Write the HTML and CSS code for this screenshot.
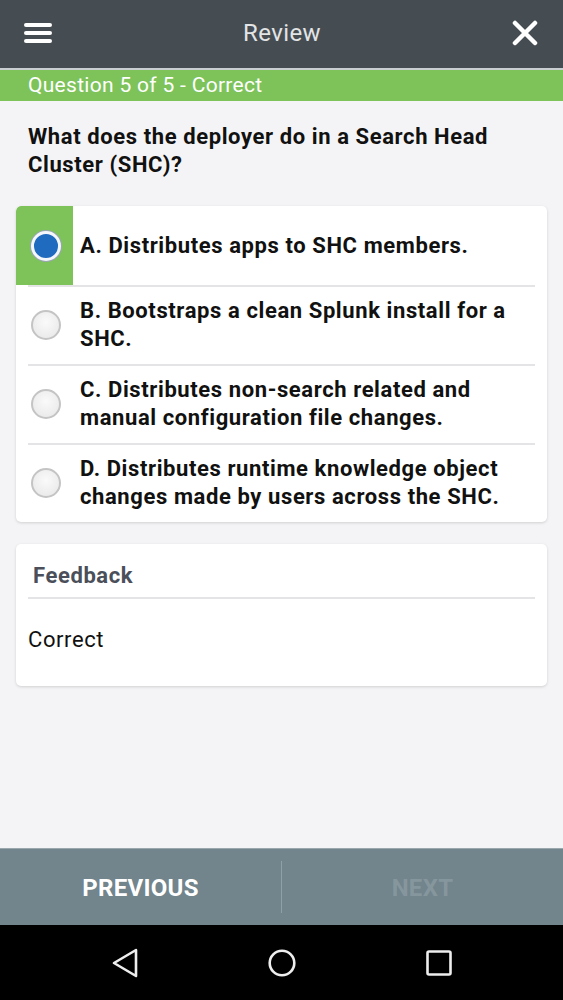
FILE: index.html
```html
<!DOCTYPE html>
<html>
<head>
<meta charset="utf-8">
<link rel="stylesheet" href="styles.css">
</head>
<body>
<div class="app">
  <header class="topbar">
    <svg class="menu" width="28" height="20" viewBox="0 0 28 20"><rect x="0" y="0" width="28" height="4" rx="2" fill="#fff"/><rect x="0" y="8" width="28" height="4" rx="2" fill="#fff"/><rect x="0" y="16" width="28" height="4" rx="2" fill="#fff"/></svg>
    <div class="title">Review</div>
    <svg class="close" width="26" height="26" viewBox="0 0 26 26"><path d="M3 3 L23 23 M23 3 L3 23" stroke="#fff" stroke-width="4.5" stroke-linecap="round"/></svg>
  </header>
  <div class="status">Question 5 of 5 - Correct</div>
  <main class="content">
    <h1 class="question">What does the deployer do in a Search Head Cluster (SHC)?</h1>
    <div class="card options">
      <div class="option selected">
        <div class="radio-cell"><span class="radio on"></span></div>
        <div class="text">A. Distributes apps to SHC members.</div>
      </div>
      <div class="option">
        <div class="radio-cell"><span class="radio"></span></div>
        <div class="text">B. Bootstraps a clean Splunk install for a SHC.</div>
      </div>
      <div class="option">
        <div class="radio-cell"><span class="radio"></span></div>
        <div class="text">C. Distributes non-search related and manual configuration file changes.</div>
      </div>
      <div class="option">
        <div class="radio-cell"><span class="radio"></span></div>
        <div class="text">D. Distributes runtime knowledge object changes made by users across the SHC.</div>
      </div>
    </div>
    <div class="card feedback">
      <div class="fb-title">Feedback</div>
      <div class="fb-body">Correct</div>
    </div>
  </main>
  <footer class="actions">
    <div class="btn">PREVIOUS</div>
    <div class="sep"></div>
    <div class="btn disabled">NEXT</div>
  </footer>
  <nav class="sysnav">
    <svg width="28" height="32" viewBox="0 0 28 32"><path d="M25 3 L3 16 L25 29 Z" fill="none" stroke="#eee" stroke-width="2.6" stroke-linejoin="round"/></svg>
    <svg width="30" height="30" viewBox="0 0 30 30"><circle cx="15" cy="15" r="12.3" fill="none" stroke="#eee" stroke-width="2.6"/></svg>
    <svg width="28" height="28" viewBox="0 0 28 28"><rect x="2.5" y="2.5" width="23" height="23" rx="1.5" fill="none" stroke="#eee" stroke-width="2.6"/></svg>
  </nav>
</div>
</body>
</html>
```

FILE: styles.css
```css
* { box-sizing: border-box; }
html, body { margin: 0; padding: 0; }
body {
  font-family: Roboto, "Noto Sans", "Liberation Sans", sans-serif;
  background: #f4f4f6;
}
.app {
  width: 563px;
  height: 1000px;
  display: flex;
  flex-direction: column;
}
.topbar {
  height: 70px;
  background: #454d53;
  border-bottom: 2px solid #c9ced0;
  display: flex;
  align-items: center;
  justify-content: space-between;
  padding: 0 24px 2px 24px;
  flex: none;
}
.topbar .close { margin-right: 1px; }
.title {
  color: #e2e4e5;
  font-size: 24px;
  letter-spacing: 0.4px;
  font-weight: 400;
}
.status {
  height: 31px;
  background: #7dc35a;
  color: #fff;
  font-size: 21px;
  letter-spacing: 0.3px;
  line-height: 31px;
  padding-left: 28px;
  flex: none;
}
.content {
  flex: 1;
  padding: 22px 16px 0 16px;
}
.question {
  margin: 0 12px 27px 12px;
  font-size: 22px;
  letter-spacing: 0.6px;
  line-height: 28px;
  font-weight: 700;
  color: #111;
}
.card {
  background: #fff;
  border-radius: 5px;
  box-shadow: 0 1px 3px rgba(0,0,0,0.15);
}
.options {
  overflow: hidden;
}
.option {
  display: flex;
  align-items: center;
  min-height: 79px;
  position: relative;
}
.option + .option::before {
  content: "";
  position: absolute;
  top: 0;
  left: 12px;
  right: 12px;
  height: 2px;
  background: #e4e4e6;
}
.radio-cell {
  width: 57px;
  align-self: stretch;
  display: flex;
  align-items: center;
  justify-content: center;
  flex: none;
  padding-left: 2px;
}
.option.selected .radio-cell {
  background: #7dc35a;
  border-radius: 5px 0 0 0;
}
.radio {
  width: 30px;
  height: 30px;
  border-radius: 50%;
  background: radial-gradient(circle at 50% 40%, #fafafa, #e6e6e6);
  border: 2px solid #c4c4c4;
  display: block;
}
.radio.on {
  background: #1e6bbf;
  border: 3px solid #f4f7fb;
  box-shadow: 0 0 0 1px #9aa7b0;
}
.text {
  padding: 9px 20px 9px 7px;
  font-size: 22px;
  letter-spacing: 0.6px;
  line-height: 28px;
  font-weight: 700;
  color: #111;
}
.feedback {
  margin-top: 22px;
  padding: 0 12px 32px 12px;
}
.fb-title {
  font-size: 22px;
  letter-spacing: 0.6px;
  font-weight: 700;
  color: #4a4f5a;
  padding: 19px 5px 8px 5px;
  line-height: 26px;
  border-bottom: 2px solid #e4e4e6;
}
.fb-body {
  font-size: 22px;
  letter-spacing: 0.6px;
  color: #111;
  padding-top: 27px;
  line-height: 28px;
}
.actions {
  height: 77px;
  background: #72848c;
  border-top: 1px solid #9aa8ae;
  display: flex;
  align-items: center;
  flex: none;
}
.btn {
  flex: 1;
  text-align: center;
  color: #fff;
  font-size: 24px;
  letter-spacing: 0.3px;
  font-weight: 700;
  padding-top: 2px;
}
.btn.disabled { color: #86969d; }
.sep {
  width: 1px;
  height: 52px;
  background: #90a0a6;
}
.sysnav {
  height: 75px;
  background: #000;
  display: flex;
  align-items: center;
  justify-content: center;
  gap: 128px;
}
```
